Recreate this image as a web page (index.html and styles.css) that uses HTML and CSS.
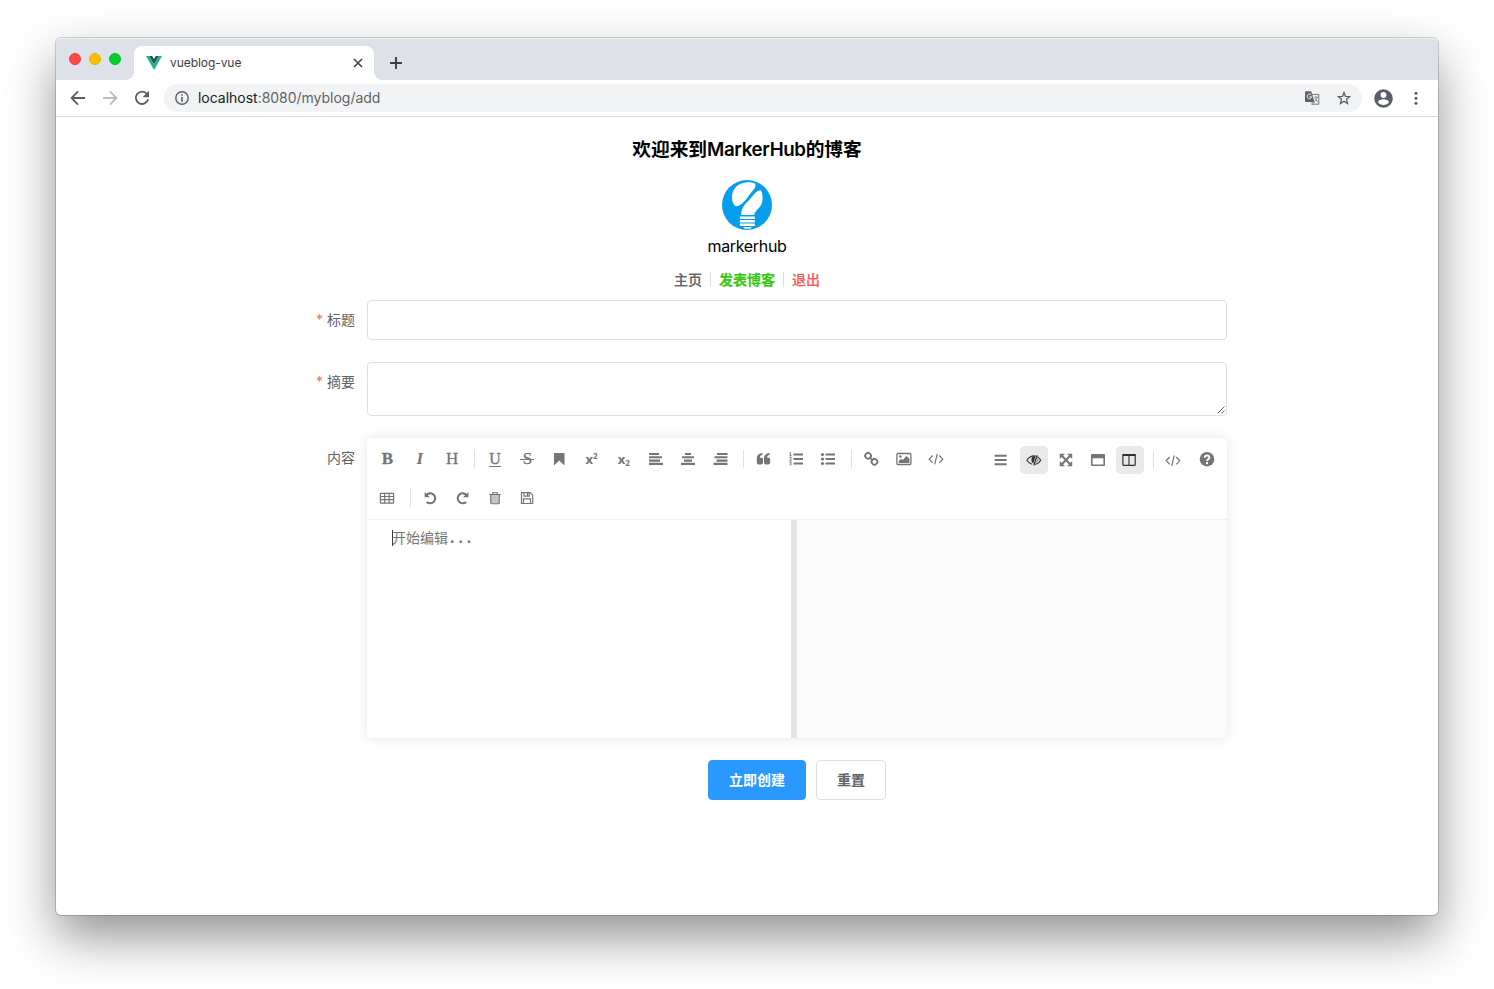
FILE: index.html
```html
<!DOCTYPE html>
<html lang="zh-CN">
<head>
<meta charset="utf-8">
<title>vueblog-vue</title>
<link rel="stylesheet" href="styles.css">
</head>
<body>
<div class="window">
  <div class="tabstrip">
    <div class="lights"><i class="red"></i><i class="yellow"></i><i class="green"></i></div>
    <div class="tab">
      <svg class="favicon" width="16" height="14" viewBox="0 0 16 14"><path fill="#16b981" d="M0 0h3.200L8 8.300 12.800 0H16L8 13.900z"/><path fill="#34495e" d="M3.200 0h3L8 3.100 9.800 0h3L8 8.300z"/></svg>
      <span class="tab-title">vueblog-vue</span>
      <svg class="tab-close" width="10" height="10" viewBox="0 0 10 10"><path d="M1 1l8 8M9 1l-8 8" stroke="#3c4043" stroke-width="1.5"/></svg>
    </div>
    <svg class="new-tab" width="12" height="12" viewBox="0 0 12 12"><path d="M6 0v12M0 6h12" stroke="#3c4043" stroke-width="1.9"/></svg>
  </div>
  <div class="navbar">
    <svg class="nav-icon" width="16" height="16" viewBox="0 0 16 16" fill="none" stroke="#5b5f64" stroke-width="1.9"><path d="M15 8H2M8 1.400L1.600 8 8 14.600"/></svg>
    <svg class="nav-icon" width="16" height="16" viewBox="0 0 16 16" fill="none" stroke="#babcbe" stroke-width="1.9"><path d="M1 8h13M8 1.400L14.400 8 8 14.600"/></svg>
    <svg class="nav-icon" width="16" height="16" viewBox="0 0 16 16"><path d="M13 4A6.200 6.200 0 1 0 14.100 9.300" fill="none" stroke="#5b5f64" stroke-width="1.900"/><path d="M15 .8v6.400H8.600z" fill="#5b5f64"/></svg>
    <div class="address">
      <svg width="14" height="14" viewBox="0 0 14 14"><circle cx="7" cy="7" r="6.200" fill="none" stroke="#5b5f64" stroke-width="1.400"/><path d="M7 3.200v1.600M7 6v4.800" stroke="#5b5f64" stroke-width="1.600"/></svg>
      <span class="url"><b>localhost</b>:8080/myblog/add</span>
      <svg class="translate" width="15" height="14" viewBox="0 0 15 14"><path d="M5.500 3.400h8.300v9.800H7.600" fill="none" stroke="#74777b"/><path d="M1 .2h5.200L9.500 11H1a1 1 0 0 1-1-1V1.200a1 1 0 0 1 1-1z" fill="#5f6368"/><path d="M6.300 4A2.300 2.300 0 1 0 6.700 5.800H4.500" fill="none" stroke="#f1f3f4"/><path d="M9 6.200h4M11 5.200v1M12 6.300q-.5 2.400-2.600 4M10 7.500l2.600 3.500M7 13.800l2.500-2.800H7z" fill="none" stroke="#74777b" stroke-width=".8"/></svg>
      <svg class="star" width="14" height="14" viewBox="0 0 14 14"><path d="M7 1.500l1.550 3.900 4.150.3-3.200 2.650 1.050 4.100L7 10.200l-3.550 2.250 1.050-4.100L1.300 5.700l4.150-.3z" fill="none" stroke="#5b5f64" stroke-width="1.300"/></svg>
    </div>
    <svg class="profile" width="19" height="19" viewBox="0 0 19 19"><circle cx="9.500" cy="9.500" r="9.300" fill="#5b5f67"/><circle cx="9.500" cy="6" r="2.900" fill="#fff"/><path d="M4 13.200c.4-2 3.600-2.900 5.500-2.900s5.100.9 5.500 2.900a6.700 6.700 0 0 1-11 0z" fill="#fff"/></svg>
    <svg class="more" width="4" height="14" viewBox="0 0 4 14" fill="#5b5f64"><circle cx="2" cy="2.200" r="1.550"/><circle cx="2" cy="7.200" r="1.550"/><circle cx="2" cy="12.200" r="1.550"/></svg>
  </div>
  <main class="page">
    <header class="header">
      <h3>欢迎来到<span>MarkerHub</span>的博客</h3>
      <svg class="avatar" width="50" height="50" viewBox="0 0 50 50"><circle cx="25" cy="25" r="25" fill="#069eec"/><g fill="#fff"><path d="M32.600 3.200C25 .9 16 3 12 9.500c-3.200 5.300-2.300 11.500.2 15.500 1.200 1.700 3.200 1.300 5.300.2 6.500-3.500 8.500-9.700 14.300-15.700C33.700 7.300 34 4.600 32.600 3.200z"/><path d="M39 10.200c1.900 4.200 2.300 9.400.6 13.800-1.900 4.500-6.600 6.300-7.400 11H19.300c-.5-8.300 5.200-11.800 9.200-16.500 3.500-4 5.500-8.100 10.500-8.300z"/><rect x="17.700" y="36.400" width="15.300" height="2.600" rx="1"/><rect x="17.700" y="40" width="15.300" height="2.600" rx="1"/><rect x="17.700" y="43.500" width="15.300" height="2.500" rx="1"/><path d="M21 47h9l-2 1.800h-5z"/></g></svg>
      <div class="username">markerhub</div>
      <nav class="links"><a>主页</a><i></i><a class="success">发表博客</a><i></i><a class="danger">退出</a></nav>
    </header>
    <form class="form">
      <div class="row"><label class="required">标题</label><div class="input"></div></div>
      <div class="row"><label class="required">摘要</label><div class="textarea"><svg width="8" height="8" viewBox="0 0 8 8"><path d="M.5 7.500l7-7M4.500 7.500l3-3" stroke="#555" stroke-width=".9"/></svg></div></div>
      <div class="row"><label>内容</label>
        <div class="editor">
          <div class="toolbar">
            <div class="tools-left">
              <span class="tool serif bold">B</span>
              <span class="tool serif italic">I</span>
              <span class="tool serif">H</span>
              <i class="divider"></i>
              <span class="tool serif underline">U</span>
              <span class="tool serif strike">S</span>
              <svg class="tool" viewBox="0 0 28 28"><path fill="#757575" d="M9 8h10.500v12.500l-5.250-5L9 20.500z"/></svg>
              <span class="tool script">x<sup>2</sup></span>
              <span class="tool script">x<sub>2</sub></span>
              <svg class="tool" viewBox="0 0 28 28"><path class="bars" d="M7 9h10M7 12.300h13M7 15.600h11M7 18.900h14"/></svg>
              <svg class="tool" viewBox="0 0 28 28"><path class="bars" d="M11 9h6M8 12.300h12M10 15.600h8M7 18.900h14"/></svg>
              <svg class="tool" viewBox="0 0 28 28"><path class="bars" d="M10 9h10.500M7.500 12.300h13M9.500 15.600h11M6.500 18.900h14"/></svg>
              <i class="divider"></i>
              <svg class="tool" viewBox="0 0 28 28"><path fill="#757575" d="M12.500 8.300v1.800c-1.800 0-2.600 1-2.600 2.700h1.300c1.200 0 1.800.6 1.800 1.800v3c0 1.200-.6 1.800-1.800 1.800H8.600c-1.200 0-1.800-.6-1.800-1.800v-4.100c0-3.200 2-5.200 5.700-5.200zM19.700 8.300v1.800c-1.800 0-2.600 1-2.600 2.700h1.300c1.200 0 1.800.6 1.800 1.800v3c0 1.200-.6 1.800-1.800 1.800h-2.600c-1.200 0-1.800-.6-1.800-1.800v-4.100c0-3.200 2-5.200 5.700-5.200z"/></svg>
              <svg class="tool" viewBox="0 0 28 28"><path class="bars" d="M11.500 9.500H21M11.500 14H21M11.500 18.500H21"/><path class="thin" d="M7.500 8l1-.5v3.300M7.300 10.800h2.400M7.400 12.500h1.800v1.200l-1.700 1.600h2.200M7.400 17h2l-1 1.300c1.600 0 1.300 2.200-.9 1.700"/></svg>
              <svg class="tool" viewBox="0 0 28 28"><path class="bars" d="M11.500 9.500H21M11.500 14H21M11.500 18.500H21"/><g fill="#757575"><circle cx="8.500" cy="9.500" r="1.600"/><circle cx="8.500" cy="14" r="1.600"/><circle cx="8.500" cy="18.500" r="1.600"/></g></svg>
              <i class="divider"></i>
              <svg class="tool" viewBox="0 0 28 28"><g fill="none" stroke="#757575" stroke-width="1.800"><rect x="8.300" y="8" width="5.500" height="5.500" rx="2.300" transform="rotate(45 11 10.800)"/><rect x="14.700" y="14" width="5.500" height="5.500" rx="2.300" transform="rotate(45 17.400 16.800)"/><path d="M12.400 12.200l3.500 3.200"/></g></svg>
              <svg class="tool" viewBox="0 0 28 28"><rect x="6.900" y="8.500" width="14" height="11" rx="1" fill="none" stroke="#757575" stroke-width="1.300"/><circle cx="10.300" cy="11.500" r="1.300" fill="#757575"/><path fill="#757575" d="M8.700 18v-2l2.500-2.300 1.500 1.300 3.800-4 2.900 2.800V18z"/></svg>
              <svg class="tool" viewBox="0 0 28 28"><path class="code" d="M10.700 10.500L7.200 14.200l3.500 3.700M17.300 10.500l3.500 3.700-3.500 3.700M15.300 9l-2.600 10.300"/></svg>
            </div>
            <div class="tools-right">
              <svg class="tool" viewBox="0 0 28 28"><path class="bars" d="M7.600 9.800h12M7.600 14h12M7.600 18.200h12"/></svg>
              <svg class="tool active" viewBox="0 0 28 28"><g fill="none" stroke="#303133" stroke-width="1.100"><path d="M15.500 10C12 9.500 9 11.200 6.800 14.300c1.200 2 2.900 3.300 5.200 3.900M17.500 10.600c1.300.8 2.400 2 3.200 3.700-1.400 2.300-3.200 3.700-5.600 4.100"/></g><path d="M17.200 9.200l-3.400 10.200" stroke="#303133" stroke-width="1.300"/><path d="M15.600 9.900c-4-.2-5.400 3.500-3.300 6.900l1 .7z" fill="#303133"/><path d="M18 12.300q.3 2.300-1.700 4" fill="none" stroke="#303133" stroke-width=".7"/></svg>
              <svg class="tool" viewBox="0 0 28 28"><path d="M9.500 9.500l9 9M18.500 9.500l-9 9" stroke="#757575" stroke-width="2"/><path fill="#757575" d="M7.800 7.800h5.200l-5.200 5.200zM20.200 7.800v5.200l-5.200-5.200zM7.800 20.200v-5.200l5.200 5.200zM20.200 20.200h-5.200l5.200-5.200z"/></svg>
              <svg class="tool" viewBox="0 0 28 28"><path fill="#757575" fill-rule="evenodd" d="M8 8h12a1 1 0 0 1 1 1V19a1 1 0 0 1-1 1H8a1 1 0 0 1-1-1V9a1 1 0 0 1 1-1zm.6 4.200V18.500h10.800v-6.300z"/></svg>
              <svg class="tool active" viewBox="0 0 28 28"><rect x="6.900" y="8.600" width="12.300" height="10.800" rx="1" fill="none" stroke="#303133" stroke-width="1.200"/><path d="M6.500 9h13.100" stroke="#303133" stroke-width="1.800"/><path d="M13 9v10.500" stroke="#303133" stroke-width="1.100"/></svg>
              <i class="divider"></i>
              <svg class="tool" viewBox="0 0 28 28"><path class="code" d="M10.700 11L7.200 14.600l3.500 3.700M17.300 11l3.500 3.600-3.500 3.700M15.300 9.500l-2.600 10.300"/></svg>
              <svg class="tool help" viewBox="0 0 28 28"><circle cx="14" cy="13.200" r="7.300" fill="#757575"/><path d="M11.700 11.600c.1-2.900 4.900-2.700 4.700 0-.1 1.500-2.300 1.700-2.300 3.400" fill="none" stroke="#fff" stroke-width="1.900"/><rect x="13" y="16.100" width="2" height="2" fill="#fff"/></svg>
            </div>
            <div class="tools-row2">
              <svg class="tool" viewBox="0 0 28 28"><path d="M8 9.300h12a.6.600 0 0 1 .6.600v8.600a.6.600 0 0 1-.6.600H8a.6.600 0 0 1-.6-.6v-8.600a.6.600 0 0 1 .6-.6zM7.500 12.500h13M7.500 15.700h13M11.700 9.500v9.500M16.100 9.500v9.500" fill="none" stroke="#757575" stroke-width="1.200"/></svg>
              <i class="divider"></i>
              <svg class="tool" viewBox="0 0 28 28"><path d="M10.200 11.300A5 5 0 1 1 10.700 17.900" fill="none" stroke="#757575" stroke-width="2.100"/><path d="M8.600 8v5.300h5.300z" fill="#757575"/></svg>
              <svg class="tool" viewBox="0 0 28 28"><path d="M18.700 11.300A5 5 0 1 0 18.200 17.900" fill="none" stroke="#757575" stroke-width="2.100"/><path d="M20.400 8v5.300h-5.300z" fill="#757575"/></svg>
              <svg class="tool" viewBox="0 0 28 28"><path d="M9.500 10.500h9v9h-9z" fill="#c4c4c4"/><path d="M8.300 10.500h11.400M11.700 10.300V8.700h4.600v1.600M9.700 10.500v8.300q0 .9.900.9h6.800q.9 0 .9-.9v-8.300" fill="none" stroke="#757575" stroke-width="1.100"/></svg>
              <svg class="tool" viewBox="0 0 28 28"><path d="M8.500 8.700h8.700l2.500 2.500v8.300H8.500zM10.500 19.300v-4.500h7v4.500M11 8.700v3.500h5.200V8.700M14.500 9v3" fill="none" stroke="#757575" stroke-width="1.200"/></svg>
            </div>
          </div>
          <div class="panes"><div class="edit"><span class="caret"></span>开始编辑<code>...</code></div><div class="preview"></div></div>
        </div>
      </div>
      <div class="actions"><span class="btn primary">立即创建</span><span class="btn">重置</span></div>
    </form>
  </main>
</div>
</body>
</html>
```

FILE: styles.css
```css
* { box-sizing: border-box; }
body { margin: 0; padding: 38px 56px 0; background: #fff; font-family: Inter, "Noto Sans CJK SC", sans-serif; height: 989px; overflow: hidden; }
svg { display: block; flex: none; }
.window { width: 1382px; height: 877px; background: #fff; border-radius: 5px; box-shadow: 0 0 0 1px rgba(0,0,0,.17), 0 22px 50px rgba(0,0,0,.43); }
.tabstrip { height: 42px; background: #dee1e8; border-radius: 5px 5px 0 0; border-top: 1px solid #eef0f3; display: flex; align-items: flex-end; }
.lights { display: flex; gap: 8px; padding: 0 13px; height: 27px; }
.lights i { width: 12px; height: 12px; border-radius: 50%; }
.red { background: #ff4a44; border: 1px solid #ee3a35; }
.yellow { background: #ffbd00; border: 1px solid #eeae00; }
.green { background: #00d02c; border: 1px solid #00c025; }
.tab { position: relative; width: 240px; height: 34px; background: #fff; border-radius: 8px 8px 0 0; display: flex; align-items: center; padding: 0 11px 0 12px; }
.tab::before, .tab::after { content: ""; position: absolute; bottom: 0; width: 8px; height: 8px; }
.tab::before { left: -8px; background: radial-gradient(circle at 0 0, #dee1e8 7.5px, #fff 8px); }
.tab::after { right: -8px; background: radial-gradient(circle at 100% 0, #dee1e8 7.5px, #fff 8px); }
.tab-title { margin-left: 8px; padding-bottom: 2px; font-size: 12px; color: #3c4043; flex: 1; letter-spacing: -.06px; }
.new-tab { margin: 0 0 11px 16px; }
.navbar { height: 37px; border-bottom: 1px solid #d9dadc; display: flex; align-items: center; padding: 0 20px 0 14px; }
.nav-icon { margin-right: 16px; }
.address { width: 1198px; height: 28px; margin-left: -2px; background: #f1f3f4; border-radius: 14px; display: flex; align-items: center; padding: 0 11px; }
.url { flex: 1; margin-left: 9px; padding-bottom: 2px; font-size: 14px; color: #5f6368; letter-spacing: -.02px; }
.url b { font-weight: 400; color: #202124; }
.star { margin-left: 17px; }
.profile { margin-left: 12.5px; }
.more { margin-left: 21px; }
.header { display: flex; flex-direction: column; align-items: center; }
h3 { margin: 19px 0 0; font-size: 18.72px; line-height: 27px; font-weight: 600; color: #000; white-space: nowrap; }
h3 span { letter-spacing: -.36px; }
.avatar { margin-top: 17px; }
.username { font-size: 16px; line-height: 24px; margin-top: 4px; color: #000; letter-spacing: -.33px; }
.links { display: flex; align-items: center; height: 20px; margin-top: 11px; font-size: 14px; font-weight: 500; color: #606266; }
.links i { width: 1px; height: 15px; margin: 0 8px; background: #dcdfe6; }
.success { color: #38c712; font-weight: 700; }
.danger { color: #f75c5c; }
.links a { -webkit-text-stroke: .2px currentColor; }
.form { width: 960px; margin: 11px 0 0 211px; }
.row { display: flex; margin-bottom: 22px; }
.row label { width: 100px; padding-right: 12px; text-align: right; font-size: 14px; line-height: 40px; color: #606266; }
.required::before { content: "*"; color: #f56c6c; margin-right: 4px; }
.input, .textarea { width: 860px; height: 40px; border: 1px solid #dcdfe6; border-radius: 4px; }
.textarea { height: 54px; display: flex; align-items: flex-end; justify-content: flex-end; padding: 1px; }
.editor { width: 860px; height: 300px; border-radius: 4px; box-shadow: 0 0 12px rgba(0,0,0,.1); overflow: hidden; }
.toolbar { height: 82px; border-bottom: 1px solid #f2f2f2; display: grid; grid-template-columns: 1fr auto; grid-template-rows: 39px 38px; padding: 2px 6.3px 0 6px; color: #757575; }
.tools-left, .tools-right, .tools-row2 { display: flex; align-items: center; gap: 4.3px; }
.tools-left { padding-bottom: 1px; }
.tool { width: 28px; height: 28px; border-radius: 5px; display: flex; align-items: center; justify-content: center; line-height: 28px; flex: none; }
.active { background: #e9e9e9; }
.divider { width: 1px; height: 18px; background: #e0e0e0; margin: 0 1px 0 4.4px; }
.serif { font-family: "Liberation Serif", serif; font-size: 17px; padding-left: 1px; -webkit-text-stroke: .3px #757575; }
.bold { font-weight: 700; }
.italic { font-style: italic; font-weight: 700; -webkit-text-stroke: 0; }
.underline { text-decoration: underline; text-underline-offset: 2px; text-decoration-thickness: 1px; font-size: 16px; }
.strike { position: relative; }
.strike::after { content: ""; position: absolute; left: 7px; top: 14px; width: 14px; height: 1px; background: #757575; }
.script { font-family: "Open Sans", sans-serif; font-weight: 700; font-size: 13px; }
.script sup, .script sub { font-size: 8px; line-height: 8px; }
.script sup { margin-bottom: 7px; }
.script sub { margin-top: 8px; }
.bars { stroke: #757575; stroke-width: 2.1; fill: none; }
.thin { stroke: #757575; stroke-width: .9; fill: none; }
.code { stroke: #757575; stroke-width: 1.2; fill: none; }
.help { margin-left: 1px; }
.panes { display: flex; height: 218px; }
.edit { width: 430px; border-right: 6px solid #e4e4e4; padding: 8px 0 0 25px; display: flex; align-items: flex-start; font-size: 14px; line-height: 20px; color: #757575; }
.edit code { font-family: "DejaVu Sans Mono", monospace; font-size: 14px; font-weight: 700; line-height: 20px; }
.caret { width: 1px; height: 16px; margin: 2px -1px 0 0; background: #2c3e50; }
.preview { flex: 1; background: #fbfbfb; }
.actions { display: flex; gap: 10px; padding-left: 441px; }
.btn { height: 40px; padding: 0 20px; border: 1px solid #dcdfe6; border-radius: 4px; font-size: 14px; line-height: 38px; font-weight: 700; color: #606266; }
.primary { background: #2998ff; border-color: #2998ff; color: #fff; }
```
